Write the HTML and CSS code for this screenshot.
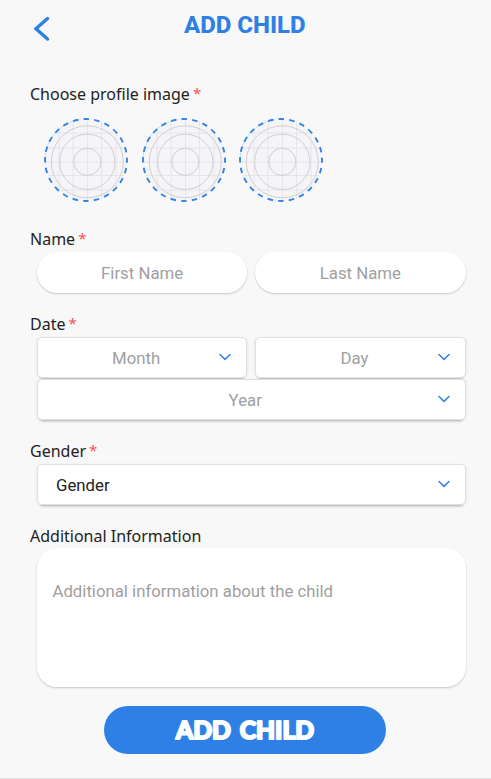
FILE: index.html
```
<!DOCTYPE html>
<html lang="en">
<head>
<meta charset="utf-8">
<title>Add child</title>
<link rel="stylesheet" href="styles.css">
</head>
<body>
<svg class="defs" width="0" height="0" aria-hidden="true">
  <symbol id="avatar" viewBox="0 0 86 86">
    <circle cx="43" cy="43" r="41" fill="#f5f5f8"/>
    <path class="grid" d="M16 12v62M30 4v78M44.5 2v82M58.500 4v78M73 14v58M14 16h58M5 31h76M2 45h82M5 58.500h76M13 73h60"/>
    <circle class="ring" cx="44.300" cy="44.800" r="36"/>
    <circle class="ring" cx="44.300" cy="44.800" r="27.700"/>
    <circle class="ring" cx="44.300" cy="44.800" r="13.600"/>
    <path class="arc" d="M2 43A41 41 0 0 1 37 2.500"/>
    <circle class="dashes" cx="43" cy="43" r="41"/>
  </symbol>
  <symbol id="chevron" viewBox="0 0 12 8"><path d="M1 1.500l5 4.800 5-4.800"/></symbol>
</svg>
<main class="screen">
  <header class="header">
    <svg class="back" viewBox="0 0 18 26"><path d="M14.500 2.500L3 12.800 14.500 23"/></svg>
    <h1 class="title">ADD CHILD</h1>
  </header>
  <section class="profile">
    <div class="label">Choose profile image<span class="star">*</span></div>
    <div class="avatars">
      <svg class="avatar"><use href="#avatar"/></svg>
      <svg class="avatar"><use href="#avatar"/></svg>
      <svg class="avatar"><use href="#avatar"/></svg>
    </div>
  </section>
  <section class="name">
    <div class="label">Name<span class="star">*</span></div>
    <div class="row">
      <div class="pill">First Name</div>
      <div class="pill">Last Name</div>
    </div>
  </section>
  <section class="date">
    <div class="label">Date<span class="star">*</span></div>
    <div class="row selects">
      <div class="select"><span>Month</span><svg class="chevron"><use href="#chevron"/></svg></div>
      <div class="select"><span>Day</span><svg class="chevron"><use href="#chevron"/></svg></div>
      <div class="select wide"><span>Year</span><svg class="chevron"><use href="#chevron"/></svg></div>
    </div>
  </section>
  <section class="gender">
    <div class="label">Gender<span class="star">*</span></div>
    <div class="row selects">
      <div class="select wide chosen"><span>Gender</span><svg class="chevron"><use href="#chevron"/></svg></div>
    </div>
  </section>
  <section class="info">
    <div class="label">Additional Information</div>
    <div class="area">Additional information about the child</div>
  </section>
  <div class="submit">
    <svg class="submit-label" viewBox="0 0 144 30"><text x="3" y="23.500" textLength="138" lengthAdjust="spacingAndGlyphs">ADD CHILD</text></svg>
  </div>
</main>
</body>
</html>
```
FILE: styles.css
```
* { box-sizing: border-box; }
body { margin: 0; background: #f8f8f8; font-family: Roboto, "Liberation Sans", sans-serif; }
.defs { position: absolute; }
.screen { height: 779px; padding: 0 25.5px 0 30px; border-bottom: 1px solid #dedede; overflow: hidden; }
.header { height: 83px; display: grid; grid-template-columns: 18px 1fr 18px; padding-top: 8px; }
.back { width: 18px; height: 26px; margin: 8px 0 0 3px; fill: none; stroke: #2f80e4; stroke-width: 3.4; stroke-linecap: round; stroke-linejoin: miter; }
.title { margin: 0; padding-right: 6px; font-size: 24px; line-height: 34px; font-weight: 800; color: #2f80e4; text-align: center; }
.label { height: 22px; line-height: 22px; font-family: "Noto Sans", sans-serif; font-size: 16px; color: #222; white-space: nowrap; }
.star { color: #fb5454; margin-left: 3px; font-size: 15px; line-height: 1; vertical-align: 1px; }
.profile { height: 145px; }
.avatars { display: flex; gap: 11.6px; padding: 12px 0 0 13px; }
.avatar { width: 86px; height: 86px; }
.grid { fill: none; stroke: #e6e6e9; stroke-width: 1; }
.ring { fill: none; stroke: #d0d0d2; stroke-width: 1; }
.arc { fill: none; stroke: #c9dffb; stroke-width: 1; }
.dashes { fill: none; stroke: #3284e9; stroke-width: 1.9; stroke-dasharray: 5.5 5.23; stroke-dashoffset: 2.7; }
.name { height: 85px; }
.date { height: 127px; }
.gender { height: 85px; }
.row { display: grid; grid-template-columns: 1fr 1fr; column-gap: 8px; padding: 2px 0 0 7px; }
.pill { height: 41px; border-radius: 21px; background: #fff; box-shadow: 0 1px 2px rgba(0, 0, 0, .2); text-align: center; line-height: 42px; font-size: 16.8px; color: #a0a0a0; }
.selects { row-gap: 1px; }
.select { height: 41px; display: flex; align-items: center; justify-content: space-between; padding: 1px 15px 0 17px; border: 1px solid #e0e0e0; border-radius: 5px; background: #fff; color: #a0a0a0; font-size: 16.8px; box-shadow: 0 4px 3px -3px rgba(0, 0, 0, .3), 2px 0 3px -1px rgba(0, 0, 0, .06), -2px 0 3px -1px rgba(0, 0, 0, .06); }
.select span { flex: 1; text-align: center; padding-right: 2px; }
.wide { grid-column: 1 / -1; }
.chosen span { text-align: left; color: #222; padding-left: 1px; }
.chevron { width: 12px; height: 8px; margin-top: -2px; fill: none; stroke: #3585e8; stroke-width: 1.6; stroke-linecap: round; stroke-linejoin: round; }
.area { height: 139px; margin: 1px 0 0 7px; padding: 33px 15.5px; border-radius: 20px; background: #fff; box-shadow: 0 1px 2px rgba(0, 0, 0, .2); font-size: 16.75px; line-height: 20px; color: #a0a0a0; }
.submit { width: 282px; height: 48px; margin: 19px 0 0 74px; border-radius: 24px; background: #2f80e4; display: flex; align-items: center; justify-content: center; }
.submit-label { width: 144px; height: 30px; font-family: Lato, sans-serif; font-weight: 700; font-size: 24.5px; word-spacing: 3px; fill: #fff; stroke: #fff; stroke-width: 2.2; stroke-linejoin: round; }
```
